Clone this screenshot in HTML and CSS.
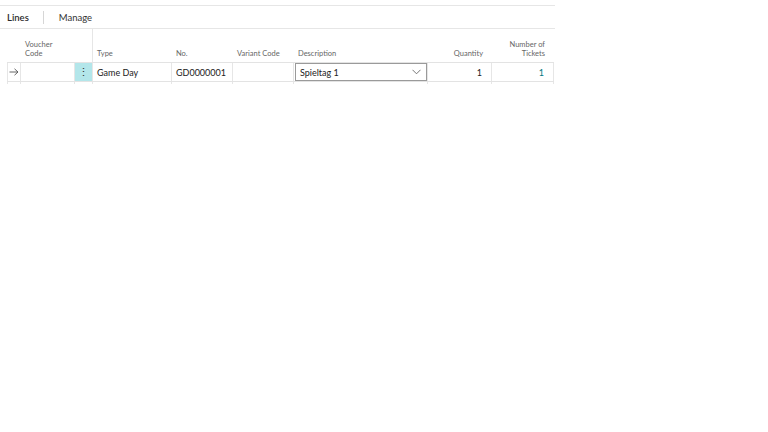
FILE: index.html
```html
<!DOCTYPE html>
<html>
<head>
    <title>Lines</title>
    <link rel="stylesheet" href="styles.css">
</head>
<body>
    <div class="part">
        <div class="toolbar">
            <span class="tab active">Lines</span>
            <span class="sep"></span>
            <span class="tab">Manage</span>
        </div>
        <div class="grid">
            <div class="head">
                <div class="c c-arrow"></div>
                <div class="c c-voucher">Voucher<br>Code</div>
                <div class="c c-dots"></div>
                <div class="c c-type">Type</div>
                <div class="c c-no">No.</div>
                <div class="c c-variant">Variant Code</div>
                <div class="c c-desc">Description</div>
                <div class="c c-qty num">Quantity</div>
                <div class="c c-tickets num">Number of<br>Tickets</div>
            </div>
            <div class="row current">
                <div class="c c-arrow">
                    <svg width="10" height="8" viewBox="0 0 10 8"><path d="M0.5 4H9M5.5 0.8L9 4L5.5 7.2" fill="none" stroke="#555" stroke-width="0.9"/></svg>
                </div>
                <div class="c c-voucher"></div>
                <div class="c c-dots"><span class="dots">⋮</span></div>
                <div class="c c-type">Game Day</div>
                <div class="c c-no">GD0000001</div>
                <div class="c c-variant"></div>
                <div class="c c-desc">
                    <div class="select">
                        <span>Spieltag 1</span>
                        <svg width="9" height="6" viewBox="0 0 9 6"><path d="M0.5 0.8L4.5 4.8L8.5 0.8" fill="none" stroke="#666" stroke-width="0.9"/></svg>
                    </div>
                </div>
                <div class="c c-qty num">1</div>
                <div class="c c-tickets num link">1</div>
            </div>
            <div class="row">
                <div class="c c-arrow"></div>
                <div class="c c-voucher"></div>
                <div class="c c-dots"></div>
                <div class="c c-type"></div>
                <div class="c c-no"></div>
                <div class="c c-variant"></div>
                <div class="c c-desc"></div>
                <div class="c c-qty"></div>
                <div class="c c-tickets"></div>
            </div>
        </div>
    </div>
</body>
</html>
```

FILE: styles.css
```css
body {
    margin: 0;
    background-color: #fff;
    font-family: Lato, "Open Sans", sans-serif;
    color: #212121;
}
.part {
    width: 555px;
    margin-top: 5px;
    border-top: 1px solid #e6e6e6;
}
.toolbar {
    display: flex;
    align-items: center;
    height: 22px;
    padding-left: 7px;
    border-bottom: 1px solid #e6e6e6;
    font-size: 9.5px;
}
.tab {
    color: #333;
}
.tab.active {
    font-weight: 600;
    color: #2b2b2b;
}
.sep {
    width: 1px;
    height: 13px;
    background-color: #d6d6d6;
    margin: 0 15px 0 14px;
}
.grid {
    height: 55px;
    overflow: hidden;
}
.head, .row {
    display: flex;
    margin-left: 7px;
    width: 547px;
}
.head {
    height: 33px;
    align-items: stretch;
    font-size: 7.5px;
    color: #666;
    line-height: 9px;
}
.head .c {
    display: flex;
    align-items: flex-end;
    padding-bottom: 4px;
}
.head .c-dots {
    border-right: 1px solid #e6e6e6;
}
.c {
    box-sizing: border-box;
    padding: 0 4px;
    flex: none;
}
.c-arrow { width: 14px; padding: 0; }
.c-voucher { width: 54px; }
.c-dots { width: 18px; padding: 0; }
.c-type { width: 79px; }
.c-no { width: 61px; }
.c-variant { width: 61px; }
.c-desc { width: 134px; padding: 0; }
.c-qty { width: 64px; }
.c-tickets { width: 62px; }
.head .c-desc { padding-left: 4px; }
.num {
    justify-content: flex-end;
    text-align: right;
    padding-right: 9px;
}
.head .num {
    padding-right: 9px;
}
.row {
    height: 18px;
    border-top: 1px solid #e3e3e3;
    font-size: 9px;
}
.row .c {
    display: flex;
    align-items: center;
    border-right: 1px solid #e6e6e6;
}
.row .c-arrow {
    border-left: 1px solid #e6e6e6;
    justify-content: center;
}
.row .num {
    justify-content: flex-end;
}
.row .c-dots {
    justify-content: center;
}
.row.current .c-dots {
    background-color: #b3e6ea;
}
.dots {
    font-size: 11px;
    color: #333;
}
.select {
    box-sizing: border-box;
    width: 134px;
    height: 18px;
    border: 1px solid #9a9a9a;
    display: flex;
    align-items: center;
    justify-content: space-between;
    padding: 0 5px 0 4px;
    margin-left: 1px;
}
.link {
    color: #00757e;
}
```
